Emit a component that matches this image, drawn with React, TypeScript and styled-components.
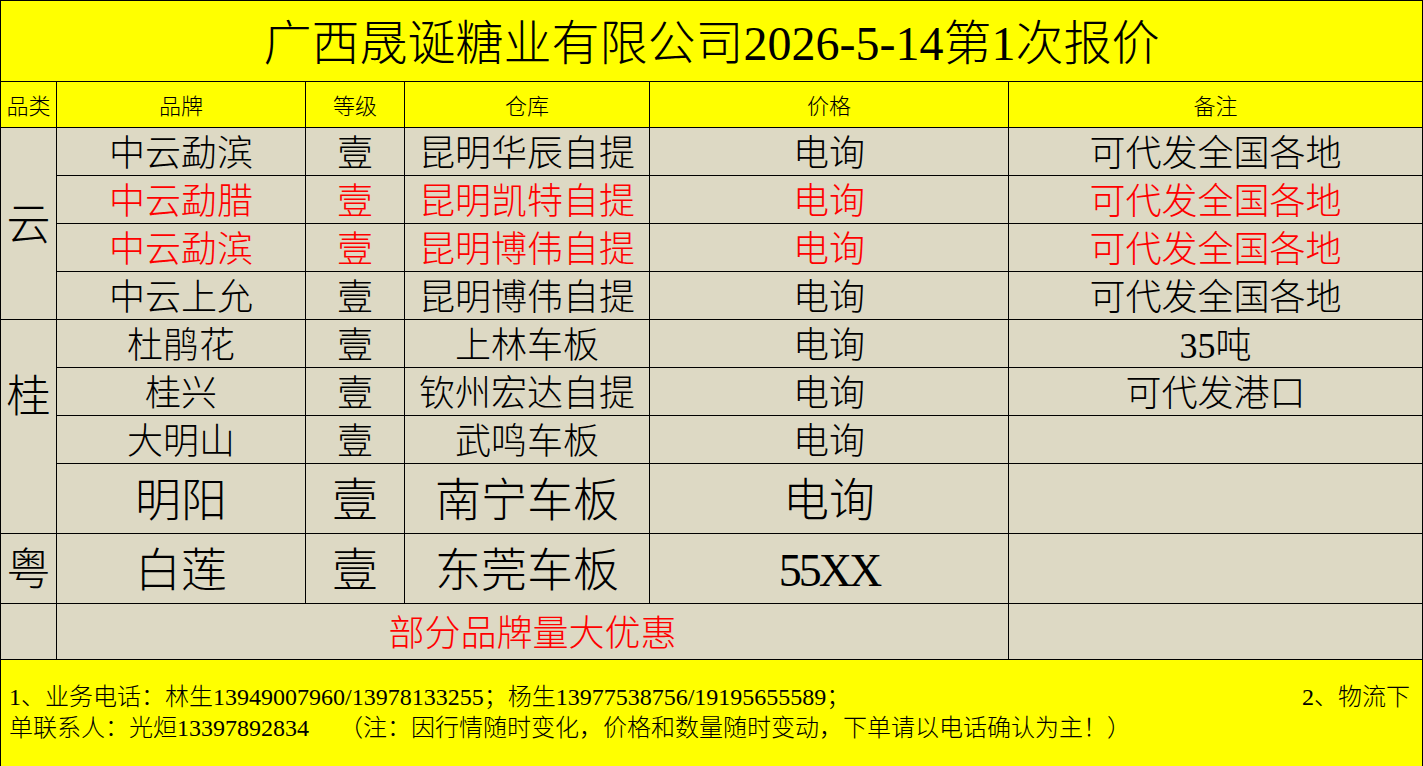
import React from "react";
import styled, { createGlobalStyle } from "styled-components";

const GlobalStyle = createGlobalStyle`
  body {
    margin: 0;
    background: #ffffff;
    font-family: "Liberation Serif", "Noto Sans CJK SC", serif;
    font-weight: 300;
  }
`;

const YELLOW = "#ffff00";
const SAND = "#ddd9c4";
const RED = "#ff0000";

const Sheet = styled.div`
  display: grid;
  grid-template-columns: 55px 248px 98px 244px 358px 413px;
  grid-template-rows: 80px 45px repeat(7, 47px) 69px 69px 55px 107px;
  gap: 1px;
  padding: 1px 1px 0 1px;
  width: fit-content;
  background: #000;
`;

const Cell = styled.div<{
  $yellow?: boolean;
  $size?: number;
  $red?: boolean;
  $span?: number;
  $col?: number;
  $row?: string;
  $lift?: number;
}>`
  display: flex;
  align-items: center;
  justify-content: center;
  background: ${(p) => (p.$yellow ? YELLOW : SAND)};
  color: ${(p) => (p.$red ? RED : "#000")};
  font-size: ${(p) => p.$size ?? 36}px;
  line-height: 1;
  white-space: nowrap;
  padding-top: 5px;
  padding-bottom: ${(p) => p.$lift ?? 0}px;
  ${(p) => (p.$span ? `grid-column: span ${p.$span};` : "")}
  ${(p) => (p.$col ? `grid-column: ${p.$col};` : "")}
  ${(p) => (p.$row ? `grid-row: ${p.$row};` : "")}
`;

const Title = styled(Cell)`
  grid-column: 1 / -1;
  padding-top: 6px;
`;

const Price = styled.span<{ $latin?: boolean }>`
  letter-spacing: ${(p) => (p.$latin ? "-3px" : "0")};
`;

const Footer = styled.div`
  grid-column: 1 / -1;
  background: ${YELLOW};
  padding: 22px 12px 0 8px;
  font-size: 24px;
  line-height: 31px;
  color: #000;
  white-space: nowrap;
`;

const FooterLine = styled.div`
  display: flex;
  justify-content: space-between;
`;

type Row = {
  brand: string;
  wh: string;
  price: string;
  note: string;
  red?: boolean;
  big?: boolean;
};

const rows: Row[] = [
  { brand: "中云勐滨", wh: "昆明华辰自提", price: "电询", note: "可代发全国各地" },
  { brand: "中云勐腊", wh: "昆明凯特自提", price: "电询", note: "可代发全国各地", red: true },
  { brand: "中云勐滨", wh: "昆明博伟自提", price: "电询", note: "可代发全国各地", red: true },
  { brand: "中云上允", wh: "昆明博伟自提", price: "电询", note: "可代发全国各地" },
  { brand: "杜鹃花", wh: "上林车板", price: "电询", note: "35吨" },
  { brand: "桂兴", wh: "钦州宏达自提", price: "电询", note: "可代发港口" },
  { brand: "大明山", wh: "武鸣车板", price: "电询", note: "" },
  { brand: "明阳", wh: "南宁车板", price: "电询", note: "", big: true },
  { brand: "白莲", wh: "东莞车板", price: "55XX", note: "", big: true },
];

const headers = ["品类", "品牌", "等级", "仓库", "价格", "备注"];

export default function App() {
  return (
    <>
      <GlobalStyle />
      <Sheet>
        <Title $yellow $size={48}>
          广西晟诞糖业有限公司2026-5-14第1次报价
        </Title>
        {headers.map((h) => (
          <Cell key={h} $yellow $size={22}>
            {h}
          </Cell>
        ))}

        <Cell $col={1} $row="3 / span 4" $size={44}>
          云
        </Cell>
        <Cell $col={1} $row="7 / span 4" $size={44} $lift={62}>
          桂
        </Cell>
        <Cell $col={1} $row="11" $size={44}>
          粤
        </Cell>
        <Cell $col={1} $row="12" />

        {rows.map((r, i) => {
          const size = r.big ? 46 : 36;
          const latin = /^[0-9A-Z]+$/.test(r.price);
          return (
            <React.Fragment key={i}>
              <Cell $size={size} $red={r.red}>
                {r.brand}
              </Cell>
              <Cell $size={size} $red={r.red}>
                壹
              </Cell>
              <Cell $size={size} $red={r.red}>
                {r.wh}
              </Cell>
              <Cell $size={latin ? 46 : size} $red={r.red}>
                <Price $latin={latin}>{r.price}</Price>
              </Cell>
              <Cell $size={36} $red={r.red}>
                {r.note}
              </Cell>
            </React.Fragment>
          );
        })}

        <Cell $span={4} $size={36} $red>
          部分品牌量大优惠
        </Cell>
        <Cell />

        <Footer>
          <FooterLine>
            <span>
              1、业务电话：林生13949007960/13978133255；杨生13977538756/19195655589；
            </span>
            <span>2、物流下</span>
          </FooterLine>
          <div>
            单联系人：光烜13397892834{"\u3000 "}（注：因行情随时变化，价格和数量随时变动，下单请以电话确认为主！）
          </div>
        </Footer>
      </Sheet>
    </>
  );
}
